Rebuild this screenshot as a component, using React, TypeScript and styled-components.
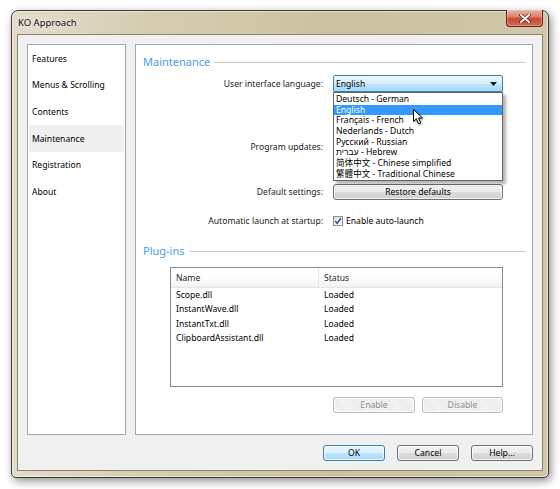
import React from "react";
import styled, { createGlobalStyle } from "styled-components";

const FONT = `"Noto Sans", "Liberation Sans", sans-serif`;
const CJK = `"Noto Sans", "Noto Sans CJK SC", "Noto Sans CJK TC", sans-serif`;

const GlobalStyle = createGlobalStyle`
  html, body {
    margin: 0;
    padding: 0;
    background: #ffffff;
  }
  body {
    font-family: ${FONT};
    font-size: 8.6px;
    color: #000;
  }
  * {
    box-sizing: border-box;
  }
`;

const navItems = [
  "Features",
  "Menus & Scrolling",
  "Contents",
  "Maintenance",
  "Registration",
  "About",
];

const languages = [
  "Deutsch - German",
  "English",
  "Français - French",
  "Nederlands - Dutch",
  "Русский - Russian",
  "עברית - Hebrew",
  "简体中文 - Chinese simplified",
  "繁體中文 - Traditional Chinese",
];

const plugins = [
  "Scope.dll",
  "InstantWave.dll",
  "InstantTxt.dll",
  "ClipboardAssistant.dll",
];

const App = () => {
  return (
    <>
      <GlobalStyle />
      <Stage>
        <Window>
          <TitleBar>
            <Title>KO Approach</Title>
            <CloseButton>
              <svg width="12" height="9" viewBox="0 0 12 9">
                <path d="M2 1 L10 8 M10 1 L2 8" stroke="#4a1a12" strokeWidth="3.4" strokeLinecap="round" />
                <path d="M2 1 L10 8 M10 1 L2 8" stroke="#ffffff" strokeWidth="2" strokeLinecap="round" />
              </svg>
            </CloseButton>
          </TitleBar>

          <Client>
            <Body>
              <Sidebar>
                {navItems.map((n) => (
                  <NavItem key={n} $active={n === "Maintenance"}>
                    {n}
                  </NavItem>
                ))}
              </Sidebar>

              <Panel>
                <SectionHead>Maintenance</SectionHead>

                <FormRow $top={7} $h={17}>
                  <Label>User interface language:</Label>
                  <Combo>
                    <ComboText>English</ComboText>
                    <svg width="7" height="4" viewBox="0 0 7 4">
                      <polygon points="0,0 7,0 3.5,4" fill="#1a1a1a" />
                    </svg>
                    <DropList>
                      {languages.map((l) => (
                        <DropItem key={l} $selected={l === "English"}>
                          {l}
                        </DropItem>
                      ))}
                      <Cursor width="11" height="16" viewBox="0 0 11 16">
                        <path
                          d="M0.5 0.5 L0.5 12.5 L3.4 9.8 L5.6 14.8 L7.7 13.9 L5.5 9 L9.5 9 Z"
                          fill="#ffffff"
                          stroke="#000000"
                          strokeWidth="1"
                          strokeLinejoin="round"
                        />
                      </Cursor>
                    </DropList>
                  </Combo>
                </FormRow>

                <FormRow $top={47} $h={16}>
                  <Label>Program updates:</Label>
                  <HiddenSlot />
                </FormRow>

                <FormRow $top={29} $h={16}>
                  <Label>Default settings:</Label>
                  <Button>Restore defaults</Button>
                </FormRow>

                <FormRow $top={13} $h={16}>
                  <Label>Automatic launch at startup:</Label>
                  <CheckLine>
                    <CheckBox>
                      <svg width="8" height="8" viewBox="0 0 8 8">
                        <path d="M1.2 4 L3.2 6.4 L7 1.2" stroke="#2b4a8c" strokeWidth="1.5" fill="none" />
                      </svg>
                    </CheckBox>
                    Enable auto-launch
                  </CheckLine>
                </FormRow>

                <SectionHead $top={14}>Plug-ins</SectionHead>

                <ListBox>
                  <ListHeader>
                    <HeadCell $divider>Name</HeadCell>
                    <HeadCell>Status</HeadCell>
                  </ListHeader>
                  {plugins.map((p) => (
                    <ListRow key={p}>
                      <span>{p}</span>
                      <span>Loaded</span>
                    </ListRow>
                  ))}
                </ListBox>

                <ListActions>
                  <Button $w={82} $disabled>
                    Enable
                  </Button>
                  <Button $w={81} $disabled>
                    Disable
                  </Button>
                </ListActions>
              </Panel>
            </Body>

            <Footer>
              <Button $w={62} $default>
                OK
              </Button>
              <Button $w={62}>Cancel</Button>
              <Button $w={62}>Help...</Button>
            </Footer>
          </Client>
        </Window>
      </Stage>
    </>
  );
};

export default App;

const Stage = styled.div`
  width: 560px;
  height: 489px;
  padding: 10px 0 0 11px;
  overflow: hidden;
`;

const Window = styled.div`
  width: 538px;
  height: 468px;
  border: 1px solid #3e3c31;
  border-radius: 7px 7px 5px 5px;
  background: linear-gradient(
    90deg,
    #e2dccb 0%,
    #d6cdb1 25%,
    #ccc2a2 60%,
    #d0c7aa 100%
  );
  box-shadow: 2px 3px 8px rgba(0, 0, 0, 0.45), inset 0 0 0 1px rgba(255, 255, 255, 0.45);
  display: flex;
  flex-direction: column;
  padding: 0 5px 6px;
`;

const TitleBar = styled.div`
  height: 23px;
  display: flex;
  align-items: center;
  padding-left: 1px;
`;

const Title = styled.span`
  font-size: 9.5px;
  color: #111;
  text-shadow: 0 0 6px rgba(255, 255, 255, 0.9), 0 0 10px rgba(255, 255, 255, 0.8);
`;

const CloseButton = styled.div`
  margin-left: auto;
  align-self: flex-start;
  margin-top: -1px;
  width: 37px;
  height: 17px;
  border: 1px solid #5e2519;
  border-top: none;
  border-radius: 0 0 4px 4px;
  background: linear-gradient(#eab0a2 0%, #dc8672 40%, #c84a31 55%, #d26b52 100%);
  box-shadow: inset 0 0 0 1px rgba(255, 220, 210, 0.35);
  display: flex;
  align-items: center;
  justify-content: center;
`;

const Client = styled.div`
  flex: 1;
  background: #f0f0f0;
  border: 1px solid #8a846e;
  padding: 9px;
  display: flex;
  flex-direction: column;
  gap: 10px;
`;

const Body = styled.div`
  flex: 1;
  display: flex;
  gap: 9px;
`;

const Sidebar = styled.div`
  width: 99px;
  background: #ffffff;
  border: 1px solid #a3a9b1;
  padding: 0 1px;
`;

const NavItem = styled.div<{ $active?: boolean }>`
  height: 26.67px;
  display: flex;
  align-items: center;
  padding: 1px 0 0 3px;
  background: ${(p) => (p.$active ? "#efefef" : "transparent")};
`;

const Panel = styled.div`
  flex: 1;
  background: #ffffff;
  border: 1px solid #a3a9b1;
  padding: 9px 7px 0;
  display: flex;
  flex-direction: column;
`;

const SectionHead = styled.div<{ $top?: number }>`
  height: 14px;
  margin-top: ${(p) => p.$top ?? 0}px;
  display: flex;
  align-items: center;
  gap: 4px;
  color: #4a9ee8;
  font-size: 11px;

  &::after {
    content: "";
    flex: 1;
    height: 1px;
    margin-top: 2px;
    background: #c9c9c9;
  }
`;

const FormRow = styled.div<{ $top: number; $h: number }>`
  margin-top: ${(p) => p.$top}px;
  height: ${(p) => p.$h}px;
  display: grid;
  grid-template-columns: 180px 170px;
  column-gap: 10px;
  align-items: center;
`;

const Label = styled.div`
  text-align: right;
  color: #1a1a1a;
  white-space: nowrap;
`;

const HiddenSlot = styled.div`
  height: 16px;
`;

const Combo = styled.div`
  position: relative;
  height: 17px;
  border: 1px solid #3c7fb1;
  border-radius: 2px;
  background: linear-gradient(#eaf6fd 0%, #d9f0fc 50%, #bee6fd 50%, #a7d9f5 100%);
  display: flex;
  align-items: center;
  padding: 0 5px 0 2px;
  z-index: 2;
`;

const ComboText = styled.span`
  flex: 1;
`;

const DropList = styled.div`
  position: absolute;
  top: 16px;
  left: -1px;
  width: 170px;
  padding-top: 1px;
  background: #ffffff;
  border: 1px solid #646464;
  box-shadow: 3px 3px 3px rgba(0, 0, 0, 0.3);
  font-family: ${CJK};
`;

const DropItem = styled.div<{ $selected?: boolean }>`
  height: 10.7px;
  line-height: 10.7px;
  padding-left: 2px;
  white-space: nowrap;
  background: ${(p) => (p.$selected ? "#3399ff" : "transparent")};
  color: ${(p) => (p.$selected ? "#ffffff" : "#000000")};
`;

const Cursor = styled.svg`
  position: absolute;
  left: 79px;
  top: 16px;
  filter: drop-shadow(1px 1px 1px rgba(0, 0, 0, 0.35));
`;

const Button = styled.div<{ $w?: number; $default?: boolean; $disabled?: boolean }>`
  width: ${(p) => (p.$w ? `${p.$w}px` : "auto")};
  height: 16px;
  border-radius: 3px;
  display: flex;
  align-items: center;
  justify-content: center;
  border: 1px solid
    ${(p) => (p.$default ? "#3c7fb1" : p.$disabled ? "#b8bbbd" : "#707070")};
  color: ${(p) => (p.$disabled ? "#8d8d8d" : "#000")};
  background: ${(p) =>
    p.$default
      ? "linear-gradient(#eaf6fd 0%, #d9f0fc 50%, #bee6fd 50%, #a7d9f5 100%)"
      : p.$disabled
      ? "repeating-linear-gradient(45deg, #f5f5f5 0 1px, #ebebeb 1px 2px)"
      : "linear-gradient(#f2f2f2 0%, #ebebeb 50%, #dddddd 50%, #cfcfcf 100%)"};
  box-shadow: inset 0 0 0 1px rgba(255, 255, 255, 0.75);
`;

const CheckLine = styled.div`
  display: flex;
  align-items: center;
  gap: 3px;
  white-space: nowrap;
`;

const CheckBox = styled.div`
  width: 10px;
  height: 10px;
  border: 1px solid #8e8f8f;
  background: linear-gradient(135deg, #d8dbe0 0%, #f6f6f6 70%, #ffffff 100%);
  display: flex;
  align-items: center;
  justify-content: center;
`;

const ListBox = styled.div`
  margin: 10px 0 0 27px;
  width: 333px;
  height: 120px;
  border: 1px solid #828790;
  background: #ffffff;
`;

const ListHeader = styled.div`
  height: 20px;
  display: grid;
  grid-template-columns: 148px 1fr;
  background: linear-gradient(#ffffff 0%, #ffffff 45%, #f1f2f4 100%);
  border-bottom: 1px solid #e3e4e6;
`;

const HeadCell = styled.div<{ $divider?: boolean }>`
  display: flex;
  align-items: center;
  padding-left: 5px;
  color: #1e1e1e;
  border-right: ${(p) => (p.$divider ? "1px solid #e3e4e6" : "none")};
`;

const ListRow = styled.div`
  height: 14.3px;
  display: grid;
  grid-template-columns: 148px 1fr;
  align-items: center;

  span {
    padding-left: 5px;
  }
`;

const ListActions = styled.div`
  margin-top: 10px;
  display: flex;
  justify-content: flex-end;
  gap: 7px;
  padding-right: 22px;
`;

const Footer = styled.div`
  height: 16px;
  display: flex;
  justify-content: flex-end;
  gap: 12px;
`;
